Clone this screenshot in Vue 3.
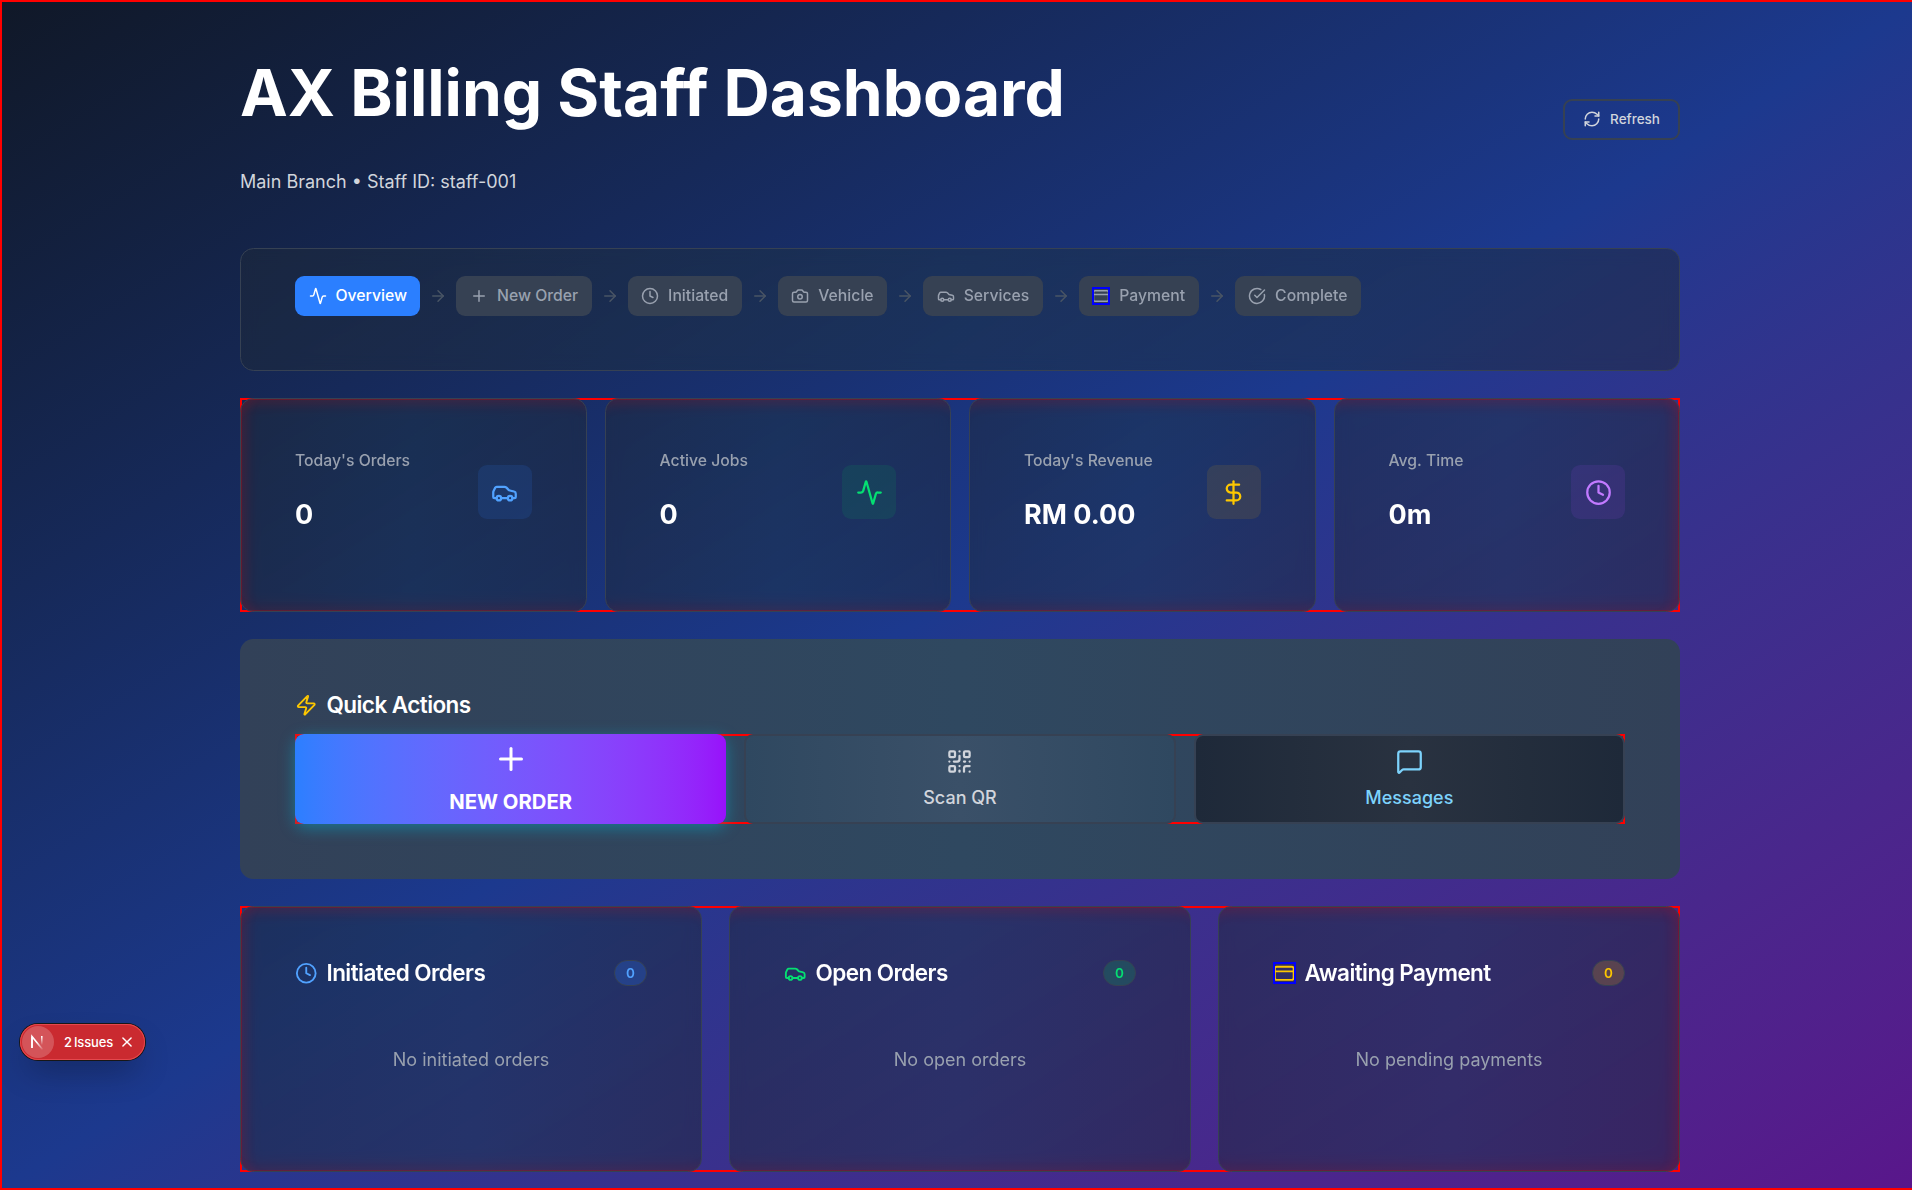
<script setup>
import { h } from 'vue'

const ring = (x, y, r) => `M${x - r} ${y}a${r} ${r} 0 1 0 ${2 * r} 0a${r} ${r} 0 1 0 ${-2 * r} 0`
const box = (x, y, w, t, r) =>
  `M${x + r} ${y}h${w - 2 * r}a${r} ${r} 0 0 1 ${r} ${r}v${t - 2 * r}a${r} ${r} 0 0 1 ${-r} ${r}h${2 * r - w}a${r} ${r} 0 0 1 ${-r} ${-r}v${2 * r - t}a${r} ${r} 0 0 1 ${r} ${-r}z`

const glyphs = {
  activity: ['M22 12h-2.48a2 2 0 0 0-1.93 1.46l-2.35 8.36a.25.25 0 0 1-.48 0L9.24 2.18a.25.25 0 0 0-.48 0l-2.35 8.36A2 2 0 0 1 4.49 12H2'],
  plus: ['M5 12h14', 'M12 5v14'],
  clock: [ring(12, 12, 10), 'M12 6v6l4 2'],
  camera: [
    'M13.997 4a2 2 0 0 1 1.76 1.05l.486.9A2 2 0 0 0 18.003 7H20a2 2 0 0 1 2 2v9a2 2 0 0 1-2 2H4a2 2 0 0 1-2-2V9a2 2 0 0 1 2-2h1.997a2 2 0 0 0 1.759-1.048l.489-.904A2 2 0 0 1 10.004 4z',
    ring(12, 13, 3),
  ],
  car: [
    'M19 17h2c.6 0 1-.4 1-1v-3c0-.9-.7-1.7-1.5-1.9C18.7 10.6 16 10 16 10s-1.3-1.4-2.2-2.3c-.5-.4-1.1-.7-1.8-.7H5c-.6 0-1.1.4-1.4.9l-1.4 2.9A3.7 3.7 0 0 0 2 12v4c0 .6.4 1 1 1h2',
    ring(7, 17, 2), 'M9 17h6', ring(17, 17, 2),
  ],
  card: [box(2, 5, 20, 14, 2), 'M2 10h20'],
  check: ['M21.801 10A10 10 0 1 1 17 3.335', 'm9 11 3 3L22 4'],
  arrow: ['M5 12h14', 'm12 5 7 7-7 7'],
  refresh: [
    'M3 12a9 9 0 0 1 9-9 9.75 9.75 0 0 1 6.74 2.74L21 8', 'M21 3v5h-5',
    'M21 12a9 9 0 0 1-9 9 9.75 9.75 0 0 1-6.74-2.74L3 16', 'M8 16H3v5',
  ],
  dollar: ['M12 2v20', 'M17 5H9.5a3.5 3.5 0 0 0 0 7h5a3.5 3.5 0 0 1 0 7H6'],
  zap: ['M4 14a1 1 0 0 1-.78-1.63l9.9-10.2a.5.5 0 0 1 .86.46l-1.92 6.02A1 1 0 0 0 13 10h7a1 1 0 0 1 .78 1.63l-9.9 10.2a.5.5 0 0 1-.86-.46l1.92-6.02A1 1 0 0 0 11 14z'],
  qr: [
    box(3, 3, 5, 5, 1), box(16, 3, 5, 5, 1), box(3, 16, 5, 5, 1),
    'M21 16h-3a2 2 0 0 0-2 2v3', 'M21 21v.01', 'M12 7v3a2 2 0 0 1-2 2H7', 'M3 12h.01',
    'M12 3h.01', 'M12 16v.01', 'M16 12h1', 'M21 12v.01', 'M12 21v-1',
  ],
  message: ['M22 17a2 2 0 0 1-2 2H6.828a2 2 0 0 0-1.414.586l-2.202 2.202A.71.71 0 0 1 2 21.286V5a2 2 0 0 1 2-2h16a2 2 0 0 1 2 2z'],
  close: ['M5 5l14 14', 'M19 5L5 19'],
}

const Icon = ({ name }) =>
  h('svg', { viewBox: '0 0 24 24', fill: 'none', stroke: 'currentColor', 'stroke-width': 2, 'stroke-linecap': 'round', 'stroke-linejoin': 'round' },
    glyphs[name].map((d) => h('path', { d })))
Icon.props = ['name']

const steps = [
  { label: 'Overview', icon: 'activity', active: true },
  { label: 'New Order', icon: 'plus' },
  { label: 'Initiated', icon: 'clock' },
  { label: 'Vehicle', icon: 'camera' },
  { label: 'Services', icon: 'car' },
  { label: 'Payment', icon: 'card' },
  { label: 'Complete', icon: 'check' },
]
const stats = [
  { label: "Today's Orders", value: '0', icon: 'car', tone: 'blue' },
  { label: 'Active Jobs', value: '0', icon: 'activity', tone: 'green' },
  { label: "Today's Revenue", value: 'RM 0.00', icon: 'dollar', tone: 'yellow' },
  { label: 'Avg. Time', value: '0m', icon: 'clock', tone: 'purple' },
]
const queues = [
  { title: 'Initiated Orders', icon: 'clock', tone: 'blue', empty: 'No initiated orders' },
  { title: 'Open Orders', icon: 'car', tone: 'green', empty: 'No open orders' },
  { title: 'Awaiting Payment', icon: 'card', tone: 'yellow', empty: 'No pending payments' },
]
</script>

<template>
  <div class="screen">
    <div class="page">
      <main class="container">
        <header class="header">
          <div>
            <h1>AX Billing Staff Dashboard</h1>
            <p class="subtitle">Main Branch • Staff ID: staff-001</p>
          </div>
          <button class="refresh"><Icon name="refresh" class="i18" />Refresh</button>
        </header>

        <nav class="card steps">
          <template v-for="(s, i) in steps" :key="s.label">
            <Icon v-if="i" name="arrow" class="i18 sep" />
            <span class="step" :class="{ active: s.active }">
              <Icon :name="s.icon" class="i18" :class="{ boxed: s.icon === 'card' }" /><span class="step-label">{{ s.label }}</span>
            </span>
          </template>
        </nav>

        <section class="frame stats">
          <article v-for="s in stats" :key="s.label" class="card stat">
            <div>
              <p class="stat-label">{{ s.label }}</p>
              <p class="stat-value">{{ s.value }}</p>
            </div>
            <span class="tile" :class="s.tone"><Icon :name="s.icon" class="i27" /></span>
          </article>
        </section>

        <section class="quick">
          <h2><Icon name="zap" class="i22 zap" />Quick Actions</h2>
          <div class="frame actions">
            <button class="action primary"><Icon name="plus" class="i36" />NEW ORDER</button>
            <button class="action scan"><Icon name="qr" class="i27" />Scan QR</button>
            <button class="action messages"><Icon name="message" class="i27" />Messages</button>
          </div>
        </section>

        <section class="frame queues">
          <article v-for="q in queues" :key="q.title" class="card queue">
            <div class="queue-head">
              <h2>
                <Icon :name="q.icon" class="i22" :class="[q.tone + '-ink', { boxed: q.icon === 'card' }]" />{{ q.title }}
              </h2>
              <span class="count" :class="q.tone">0</span>
            </div>
            <p class="empty">{{ q.empty }}</p>
          </article>
        </section>
      </main>
    </div>

    <div class="issues">
      <span class="mark">
        <svg width="32" height="32" viewBox="0 0 32 32" fill="none">
          <defs>
            <linearGradient id="fadeA" x1="16" y1="16" x2="22" y2="24" gradientUnits="userSpaceOnUse">
              <stop stop-color="#fff" /><stop offset="1" stop-color="#fff" stop-opacity="0" />
            </linearGradient>
            <linearGradient id="fadeB" x1="20.5" y1="10" x2="20.5" y2="19" gradientUnits="userSpaceOnUse">
              <stop stop-color="#fff" /><stop offset="1" stop-color="#fff" stop-opacity="0" />
            </linearGradient>
          </defs>
          <path d="M11 22V10.6L21.6 23.6" stroke="url(#fadeA)" stroke-width="1.6" />
          <path d="M11 22V10.6" stroke="#fff" stroke-width="1.6" />
          <path d="M20.8 10v9" stroke="url(#fadeB)" stroke-width="1.6" />
        </svg>
      </span>
      <span class="issues-text"><span>2</span><span>Issues</span></span>
      <Icon name="close" class="close" />
    </div>
  </div>
</template>

<style>
html,
body {
  margin: 0;
  overflow: hidden;
}
</style>

<style scoped>
* {
  box-sizing: border-box;
}
h1, h2, p {
  margin: 0;
}
svg {
  display: block;
  flex: none;
}
button {
  font: inherit;
  margin: 0;
}
.screen {
  width: 100%;
  height: 1190px;
  overflow: hidden;
  font-family: Inter, sans-serif;
  font-size: 18px;
  color: #fff;
}
.page {
  width: 1920px;
  height: 1190px;
  border: 2px solid #f00;
  background: linear-gradient(to bottom right in oklab, #101828, #1c398e, #59168b);
}
.container {
  width: 1440px;
  margin: 0 auto;
  display: flex;
  flex-direction: column;
}
.header {
  height: 246px;
  padding-top: 51px;
  display: flex;
  justify-content: space-between;
  align-items: flex-start;
}
h1 {
  font-size: 64px;
  line-height: 80px;
  font-weight: 700;
}
.subtitle {
  margin-top: 34px;
  line-height: 29px;
  color: #d1d5dc;
}
.refresh {
  display: flex;
  align-items: center;
  gap: 9px;
  height: 41px;
  margin-top: 46px;
  padding: 0 18px 2px;
  border: 2px solid #364153;
  border-radius: 9px;
  background: transparent;
  color: #d1d5dc;
  font-size: 13.5px;
  font-weight: 500;
}
.i18 { width: 18px; height: 18px; }
.i22 { width: 22.5px; height: 22.5px; }
.i27 { width: 27px; height: 27px; }
.i36 { width: 36px; height: 36px; }
.boxed {
  outline: 2px solid #00f;
  outline-offset: -2px;
}
.card {
  border: 1px solid #364153;
  border-radius: 13.5px;
  background: linear-gradient(90deg, rgba(30, 41, 57, 0.5), rgba(28, 50, 70, 0.5) 50%, rgba(30, 41, 57, 0.5));
  backdrop-filter: blur(8px);
}
.frame {
  display: grid;
  box-shadow: inset 0 0 0 2px #f00;
}
.frame > .card {
  --edges: inset 0 14px 14px -12px rgba(255, 0, 0, 0.13), inset 0 -12px 12px -12px rgba(255, 0, 0, 0.08);
  box-shadow: var(--edges);
}
.frame > .card:first-child {
  box-shadow: var(--edges), inset 14px 0 14px -12px rgba(255, 0, 0, 0.13);
}
.frame > .card:last-child {
  box-shadow: var(--edges), inset -14px 0 14px -12px rgba(255, 0, 0, 0.13);
}
.steps {
  display: flex;
  align-items: center;
  gap: 9px;
  height: 123px;
  padding: 27px 54px 54px;
}
.step {
  display: flex;
  align-items: center;
  gap: 9px;
  height: 40px;
  padding: 0 13.5px;
  border-radius: 9px;
  background: #364153;
  color: #99a1af;
  font-size: 15.75px;
  font-weight: 500;
}
.step-label {
  padding-bottom: 1px;
}
.step.active {
  background: #2b7fff;
  color: #fff;
}
.sep {
  color: #4a5565;
}
.stats {
  margin-top: 27px;
  height: 214px;
  grid-template-columns: repeat(4, 1fr);
  gap: 18px;
}
.stat {
  display: flex;
  justify-content: space-between;
  align-items: flex-start;
  padding: 49px 54px 0;
}
.stat-label {
  font-size: 15.75px;
  line-height: 26px;
  font-weight: 500;
  color: #99a1af;
}
.stat-value {
  margin-top: 23px;
  font-size: 27px;
  line-height: 36px;
  font-weight: 700;
}
.tile {
  display: flex;
  align-items: center;
  justify-content: center;
  width: 54px;
  height: 54px;
  margin-top: 17px;
  border-radius: 9px;
}
.tile.blue { background: rgba(43, 127, 255, 0.13); color: #51a2ff; }
.tile.green { background: rgba(0, 201, 80, 0.11); color: #05df72; }
.tile.yellow { background: rgba(240, 177, 0, 0.11); color: #fdc700; }
.tile.purple { background: rgba(173, 70, 255, 0.11); color: #c27aff; }
.blue-ink { color: #51a2ff; }
.green-ink { color: #05df72; }
.yellow-ink { color: #fdc700; }
.quick {
  margin-top: 27px;
  height: 240px;
  padding: 52px 55px 0;
  border-radius: 13.5px;
  background: linear-gradient(90deg, #324158, #2f4860 50%, #324158);
}
h2 {
  display: flex;
  align-items: center;
  gap: 9px;
  font-size: 22.5px;
  line-height: 28px;
  font-weight: 600;
  letter-spacing: -0.025em;
  color: #fff;
}
.zap {
  color: #fdc700;
}
.actions {
  margin-top: 15px;
  height: 90px;
  grid-template-columns: repeat(3, 1fr);
  gap: 18px;
}
.action {
  display: flex;
  flex-direction: column;
  align-items: center;
  border-radius: 9px;
  border: 2px solid #364153;
  padding: 12px 0 0;
  gap: 9px;
  line-height: 27px;
  font-weight: 500;
}
.primary {
  border: 0;
  padding-top: 7px;
  gap: 11px;
  background: linear-gradient(to right in oklab, #2b7fff, #9810fa);
  box-shadow: 0 4px 16px rgba(0, 184, 219, 0.45);
  color: #fff;
  font-size: 20.25px;
  font-weight: 700;
}
.scan {
  background: linear-gradient(90deg, #2f4860, #3a5068 50%, #2f4860);
  color: #d1d5dc;
}
.messages {
  background: linear-gradient(90deg, #1e2939, #293240 50%, #1e2939);
  color: #7dd3fc;
}
.queues {
  margin-top: 27px;
  height: 266px;
  grid-template-columns: repeat(3, 1fr);
  gap: 27px;
}
.queue {
  padding: 52px 54px 0;
}
.queue-head {
  display: flex;
  align-items: center;
  justify-content: space-between;
}
.count {
  display: flex;
  align-items: center;
  justify-content: center;
  width: 33px;
  height: 25.5px;
  border: 1px solid #364153;
  border-radius: 13px;
  font-size: 13.5px;
  font-weight: 600;
}
.count.blue { background: rgba(43, 127, 255, 0.23); color: #51a2ff; }
.count.green { background: rgba(0, 201, 80, 0.2); color: #05df72; }
.count.yellow { background: rgba(240, 177, 0, 0.2); color: #fdc700; }
.empty {
  margin-top: 58px;
  line-height: 29px;
  text-align: center;
  color: #99a1af;
}
.issues {
  position: absolute;
  left: 20px;
  top: 1024px;
  display: flex;
  align-items: center;
  width: 125px;
  height: 36px;
  padding: 2px;
  border-radius: 18px;
  background: #ca2a30;
  box-shadow: 0 0 0 1px #171717, inset 0 0 0 1px #e5484d, 0 16px 32px -8px rgba(0, 0, 0, 0.35);
}
.mark {
  width: 32px;
  height: 32px;
  margin-right: 10px;
  border-radius: 50%;
  background: rgba(255, 255, 255, 0.2);
}
.mark svg {
  transform: translateX(-1px);
}
.issues-text {
  display: flex;
  gap: 2px;
  padding-bottom: 1px;
  font-size: 13px;
  font-weight: 500;
  letter-spacing: -0.01em;
}
.close {
  width: 14px;
  height: 14px;
  margin-left: 7px;
  stroke-width: 2.5;
}
</style>
